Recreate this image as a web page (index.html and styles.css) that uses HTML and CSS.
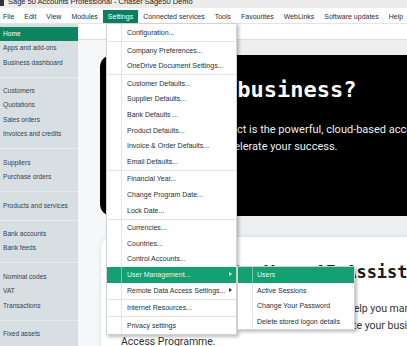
FILE: index.html
```html
<!DOCTYPE html>
<html lang="en">
<head>
  <meta charset="UTF-8">
  <meta name="viewport" content="width=device-width, initial-scale=1.0">
  <title>Sage 50 Accounts Professional</title>
  <link rel="stylesheet" href="styles.css">
</head>
<body>
  <div class="titlebar">
    <div class="app-icon"></div>
    <span>Sage 50 Accounts Professional - Chaser Sage50 Demo</span>
  </div>

  <div class="menubar">
    <div class="menu-item">File</div>
    <div class="menu-item">Edit</div>
    <div class="menu-item">View</div>
    <div class="menu-item">Modules</div>
    <div class="menu-item open">Settings</div>
    <div class="menu-item">Connected services</div>
    <div class="menu-item">Tools</div>
    <div class="menu-item">Favourites</div>
    <div class="menu-item">WebLinks</div>
    <div class="menu-item">Software updates</div>
    <div class="menu-item">Help</div>
  </div>

  <div class="workspace">
    <!-- Left navigation -->
    <div class="sidebar">
      <div class="nav-item active">Home</div>
      <div class="nav-item">Apps and add-ons</div>
      <div class="nav-item">Business dashboard</div>
      <div class="nav-sep"></div>
      <div class="nav-item">Customers</div>
      <div class="nav-item">Quotations</div>
      <div class="nav-item">Sales orders</div>
      <div class="nav-item">Invoices and credits</div>
      <div class="nav-sep"></div>
      <div class="nav-item">Suppliers</div>
      <div class="nav-item">Purchase orders</div>
      <div class="nav-sep"></div>
      <div class="nav-item">Products and services</div>
      <div class="nav-sep"></div>
      <div class="nav-item">Bank accounts</div>
      <div class="nav-item">Bank feeds</div>
      <div class="nav-sep"></div>
      <div class="nav-item">Nominal codes</div>
      <div class="nav-item">VAT</div>
      <div class="nav-item">Transactions</div>
      <div class="nav-sep"></div>
      <div class="nav-item">Fixed assets</div>
      <div class="nav-item">Fixed asset list</div>
    </div>

    <!-- Home page content -->
    <div class="main">
      <div class="addressbar"></div>
      <div class="page">
        <div class="band"></div>
        <div class="hero">
          <h2>Sage for business?</h2>
          <p>Discover why Sage Intacct is the powerful, cloud-based accounting<br>software devised to accelerate your success.</p>
        </div>
        <div class="band gap"></div>
        <div class="card">
          <h2>Sage Copilot: Your AI Assistant</h2>
          <p>Sage Copilot, your AI assistant, is always here to help you manage<br>the day-to-day tasks, save more time and accelerate your business growth.<br>Access Programme.</p>
        </div>
      </div>
    </div>
  </div>

  <!-- Settings dropdown -->
  <div class="dropdown">
    <div class="dd-item">Configuration...</div>
    <div class="dd-sep"></div>
    <div class="dd-item">Company Preferences...</div>
    <div class="dd-item">OneDrive Document Settings...</div>
    <div class="dd-sep"></div>
    <div class="dd-item">Customer Defaults...</div>
    <div class="dd-item">Supplier Defaults...</div>
    <div class="dd-item">Bank Defaults ...</div>
    <div class="dd-item">Product Defaults...</div>
    <div class="dd-item">Invoice &amp; Order Defaults...</div>
    <div class="dd-item">Email Defaults...</div>
    <div class="dd-sep"></div>
    <div class="dd-item">Financial Year...</div>
    <div class="dd-item">Change Program Date...</div>
    <div class="dd-item">Lock Date...</div>
    <div class="dd-sep"></div>
    <div class="dd-item">Currencies...</div>
    <div class="dd-item">Countries...</div>
    <div class="dd-item">Control Accounts...</div>
    <div class="dd-item hot has-sub">User Management...</div>
    <div class="dd-item has-sub">Remote Data Access Settings...</div>
    <div class="dd-sep"></div>
    <div class="dd-item">Internet Resources...</div>
    <div class="dd-sep"></div>
    <div class="dd-item">Privacy settings</div>
  </div>

  <!-- User Management submenu -->
  <div class="dropdown submenu">
    <div class="dd-item hot">Users</div>
    <div class="dd-item">Active Sessions</div>
    <div class="dd-item">Change Your Password</div>
    <div class="dd-item">Delete stored logon details</div>
  </div>
</body>
</html>
```

FILE: styles.css
```css
body {
  margin: 0;
  width: 407px;
  height: 346px;
  overflow: hidden;
  font-family: "Liberation Sans", Arial, sans-serif;
  background-color: #fff;
  color: #222;
}

.titlebar {
  display: flex;
  height: 8px;
  overflow: hidden;
  background-color: #ececec;
  font-size: 7.5px;
  line-height: 3px;
  color: #222;
}

.app-icon {
  width: 4px;
  height: 6px;
  background-color: #333;
  margin-right: 4px;
}

.menubar {
  display: flex;
  align-items: flex-start;
  box-sizing: border-box;
  height: 16px;
  padding-top: 2px;
  background-color: #fff;
  border-bottom: 1px solid #e4e4e4;
  font-size: 7px;
  color: #2a2f36;
}

.menu-item {
  height: 13px;
  line-height: 13px;
  padding: 0 5px;
  white-space: nowrap;
}

.menu-item:first-child {
  padding-left: 3px;
}

.menu-item.open {
  background-color: #0b7f5c;
  color: #fff;
}

.workspace {
  display: flex;
  height: 322px;
}

.sidebar {
  width: 78px;
  flex-shrink: 0;
  padding-top: 3px;
  background-color: #d8dfe3;
  font-size: 6.6px;
  color: #33434f;
}

.nav-item {
  height: 14.3px;
  line-height: 14.3px;
  padding-left: 3px;
  white-space: nowrap;
}

.nav-item.active {
  background-color: #0b8660;
  color: #fff;
}

.nav-sep {
  display: flex;
  align-items: center;
  height: 14.3px;
}

.nav-sep::after {
  content: "";
  flex: 1;
  height: 1px;
  background-color: #e7ebee;
}

.main {
  flex: 1;
  min-width: 0;
  background-color: #f6f7f8;
}

.addressbar {
  height: 15px;
  background-color: #fff;
  border-bottom: 1px solid #dcdcdc;
}

.page {
  padding-left: 22px;
}

.band {
  height: 15px;
  margin-left: 10px;
  background-color: #eceeef;
}

.band.gap {
  height: 21px;
}

.hero {
  box-sizing: border-box;
  height: 161px;
  padding: 22px 0 0 18px;
  border-radius: 12px 0 0 12px;
  background-color: #000;
  color: #fff;
  white-space: nowrap;
}

.hero h2,
.card h2 {
  margin: 0;
  font-family: "DejaVu Sans Mono", monospace;
  font-size: 22px;
  line-height: 26px;
  font-weight: bold;
}

.hero p {
  margin: 18px 0 0;
  font-family: Roboto, sans-serif;
  font-size: 11px;
  line-height: 17px;
  color: #eee;
}

.card {
  height: 120px;
  padding: 24px 0 0 20px;
  margin-left: 1px;
  border-radius: 10px 0 0 0;
  background-color: #fff;
  box-shadow: 0 0 4px rgba(0, 0, 0, 0.12);
  white-space: nowrap;
  color: #1a1a1a;
}

.card h2 {
  font-size: 17px;
  line-height: 22px;
}

.card p {
  margin: 18px 0 0;
  font-family: Roboto, sans-serif;
  font-size: 10.5px;
  line-height: 16.5px;
  color: #333;
}

/* dropdown menus */
.dropdown {
  position: absolute;
  left: 106px;
  top: 23px;
  width: 129px;
  padding: 1px 0;
  border: 1px solid #d2d2d2;
  background: linear-gradient(to right, transparent 14px, #e6e6e6 14px, #e6e6e6 15px, transparent 15px), #fff;
  box-shadow: 2px 2px 3px rgba(0, 0, 0, 0.25);
  font-size: 7px;
  color: #24303c;
}

.dd-item {
  position: relative;
  height: 15.6px;
  line-height: 15.6px;
  padding-left: 20px;
  white-space: nowrap;
}

.dd-item.hot {
  background: linear-gradient(to right, #13a072 14px, #6fc7a6 14px, #6fc7a6 15px, #13a072 15px);
  color: #eaf6f0;
}

.dd-item.has-sub::after {
  content: "";
  position: absolute;
  right: 4px;
  top: 5.5px;
  border-left: 3px solid #24303c;
  border-top: 2.5px solid transparent;
  border-bottom: 2.5px solid transparent;
}

.dd-item.hot.has-sub::after {
  border-left-color: #fff;
}

.dd-sep {
  height: 1px;
  margin: 0.5px 0;
  background-color: #e3e3e3;
}

.submenu {
  left: 237px;
  top: 266px;
  width: 116px;
  padding: 0;
}

.submenu .dd-item {
  height: 15.5px;
  line-height: 15.5px;
  padding-left: 19px;
}
```
